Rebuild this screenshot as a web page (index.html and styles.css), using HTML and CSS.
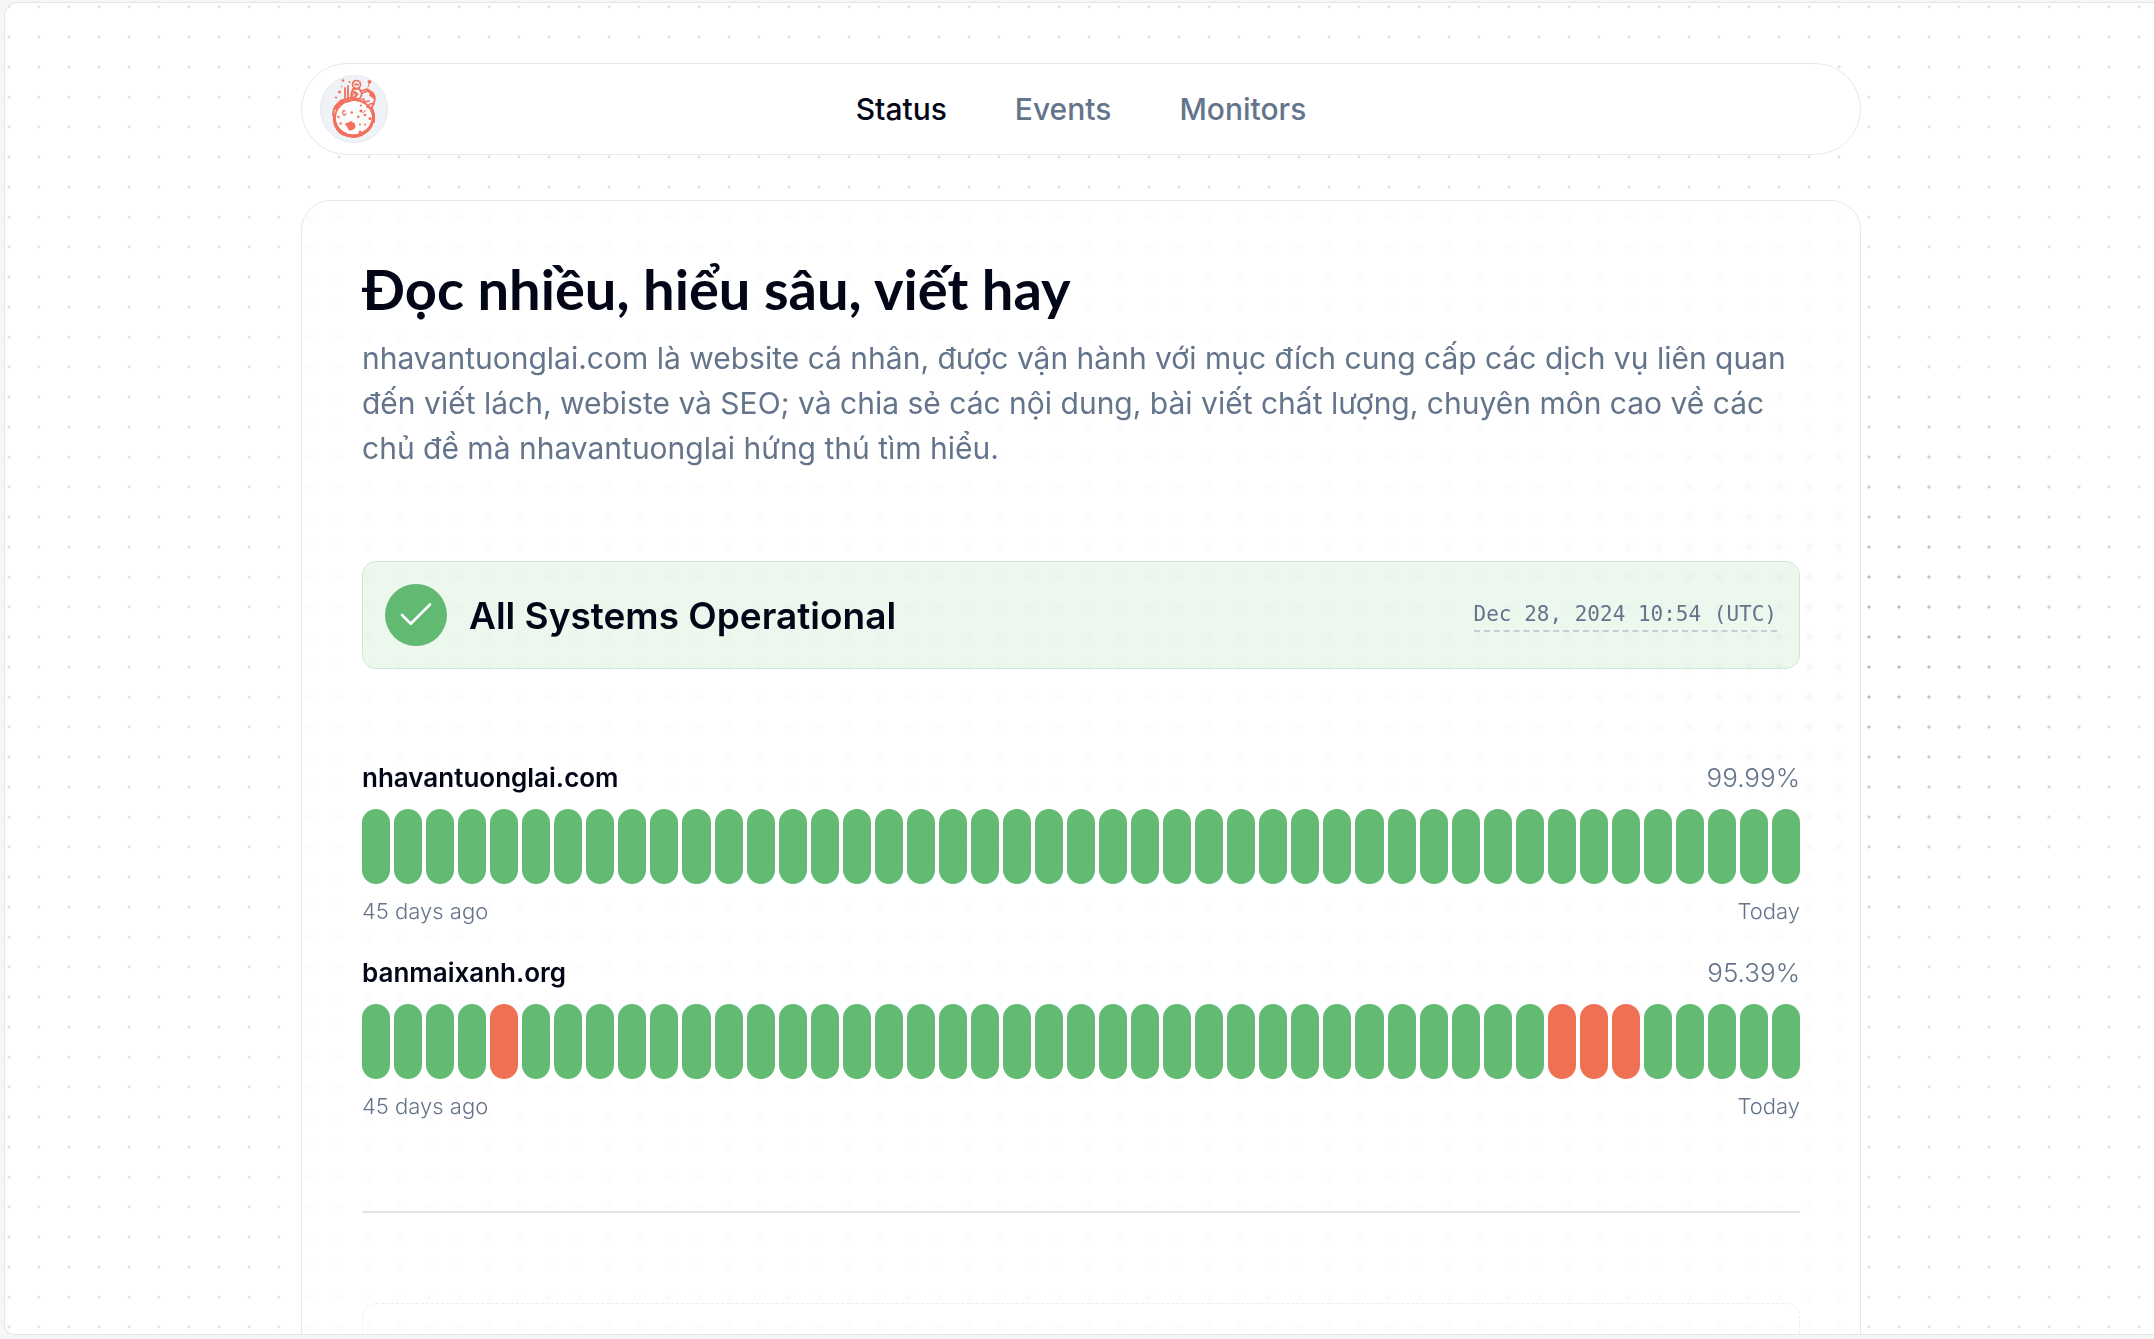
FILE: index.html
```html
<!DOCTYPE html>
<html lang="vi">
<head>
<meta charset="utf-8">
<meta name="viewport" content="width=device-width, initial-scale=1">
<title>Đọc nhiều, hiểu sâu, viết hay</title>
<link rel="stylesheet" href="styles.css">
</head>
<body>
<div class="frame">
  <div class="spotlight" aria-hidden="true"></div>
  <div class="page">
    <header class="topbar">
      <a class="logo" href="#" aria-label="Home">
        <svg viewBox="1 1 66 66" width="66" height="66" fill="none" stroke="#f2705c" stroke-linecap="round" stroke-linejoin="round">
          <ellipse cx="34" cy="43" rx="19" ry="18" fill="#fcfcfd" stroke-width="2" stroke-dasharray="7 1 3 .6"/>
          <path d="M14 39c-2 9 2 17 9 21 7 3 15 3 21-1 7-4 10-10 9-18-1 8-4 13-10 16-6 4-14 4-20 0-6-4-9-10-9-18Z" fill="#f2705c" stroke-width="1.3"/>
          <path d="M13 40c0-7 4-12 10-15l8-2 7 2M16 34l3-5 5-2 6-1M52 33l2 6v8" stroke-width="2"/>
          <path d="M25 23V13m3 11V11m-5 14-3 1M31 22l2-3" stroke-width="1.8"/>
          <circle cx="36.500" cy="9.500" r="4" stroke-width="1.7"/>
          <path d="M35 9.500h3M33 14l6-.5 3 5-2 5-6 1-3-5Z" stroke-width="1.8"/>
          <path d="m34 17 3 2-2 3" stroke-width="2.600"/>
          <path d="m41 16 6-2 6 4 2 4-7-6-6 2M43 24l2 3 4-1M50 20l5 4-1 4-4 1-3 3 4 1 3-4" stroke-width="1.700"/>
          <path d="m48 12 1.500-4M40 25l4-1M43 38l3-3" stroke-width="1"/>
          <path d="M25 36c-2-1-3 1-2 3s2 1 3 0" stroke-width="1.300"/>
          <path d="m26 49 3-1 2-1 3 2 .5 3-2 2-3 .5-1-2Z" fill="#f2705c" stroke-width="1.800"/>
          <g fill="#f2705c" stroke="none">
            <circle cx="23" cy="5.500" r="1.300"/><circle cx="29.500" cy="7" r="1"/><circle cx="49.500" cy="6.800" r="1.900"/>
            <circle cx="19.500" cy="17" r="1.500"/><circle cx="21.500" cy="11.500" r=".8"/><circle cx="16" cy="22.500" r="1.100"/>
            <circle cx="31.700" cy="37.500" r="1.300"/><circle cx="41" cy="30.500" r="1.100"/><circle cx="41" cy="36" r="1.600"/>
            <circle cx="38.300" cy="41.700" r="1.300"/><circle cx="45" cy="40" r="1.300"/><circle cx="50" cy="43.500" r="1.500"/>
            <circle cx="20.700" cy="48.500" r="1.200"/><circle cx="40" cy="49.500" r="1"/><circle cx="45" cy="49.500" r="1"/>
            <circle cx="40" cy="57" r="1.400"/><circle cx="18.500" cy="42" r="1.200"/><circle cx="46.500" cy="15.500" r=".8"/>
          </g>
        </svg>
      </a>
      <nav class="tabs" aria-label="Main">
        <a class="tab tab-active" href="#status" aria-current="page">Status</a>
        <a class="tab" href="#events">Events</a>
        <a class="tab" href="#monitors">Monitors</a>
      </nav>
    </header>

    <main class="card" id="status">
      <div class="intro">
        <h1>Đọc nhiều, hiểu sâu, viết hay</h1>
        <p>nhavantuonglai.com là website cá nhân, được vận hành với mục đích cung cấp các dịch vụ liên quan đến viết lách, webiste và SEO; và chia sẻ các nội dung, bài viết chất lượng, chuyên môn cao về các chủ đề mà nhavantuonglai hứng thú tìm hiểu.</p>
      </div>

      <section class="banner">
        <span class="badge">
          <svg viewBox="0 0 24 24" width="42" height="42" fill="none" stroke="#fff" stroke-width="1.500" stroke-linecap="round" stroke-linejoin="round" aria-hidden="true"><path d="M20 6 9 17l-5-5"/></svg>
        </span>
        <h2>All Systems Operational</h2>
        <time datetime="2024-12-28T10:54Z">Dec 28, 2024 10:54 (UTC)</time>
      </section>

      <div class="monitors" id="monitors">
        <section class="monitor">
          <div class="row"><h3>nhavantuonglai.com</h3><span class="uptime">99.99%</span></div>
          <div class="bars" data-down=""></div>
          <div class="row range"><span>45 days ago</span><span>Today</span></div>
        </section>
        <section class="monitor">
          <div class="row"><h3>banmaixanh.org</h3><span class="uptime">95.39%</span></div>
          <div class="bars" data-down="4,37,38,39"></div>
          <div class="row range"><span>45 days ago</span><span>Today</span></div>
        </section>
      </div>

      <hr>
      <section class="events" id="events"></section>
    </main>
  </div>
</div>
<script src="script.js"></script>
</body>
</html>
```
FILE: styles.css
```css
* { box-sizing: border-box; margin: 0; }

body {
  background: #f6f6f7;
  color: #020617;
  font-family: Inter, "Liberation Sans", sans-serif;
  font-size: 30px;
  line-height: 45px;
}

a { color: inherit; text-decoration: none; }

.frame {
  position: relative;
  height: calc(100vh - 6px);
  margin: 2px 0 4px 4px;
  padding: 60px 24px 0 27px;
  overflow: hidden;
  border: 1px solid #e5e5e6;
  border-right: 0;
  border-radius: 14px 0 0 10px;
  background: radial-gradient(circle, #e2e2e4 1px, transparent 2px) -11px -11px / 30px 30px #fff;
}

/* darker dots fading out around one point */
.spotlight {
  position: absolute;
  inset: 0;
  background: radial-gradient(circle, #bdbdc0 1px, transparent 2px) -11px -11px / 30px 30px;
  mask-image: radial-gradient(circle 300px at 1850px 635px, #000 20%, transparent);
}

.page {
  position: relative;
  display: flex;
  flex-direction: column;
  gap: 45px;
  max-width: 1560px;
  margin: 0 auto;
}

.topbar {
  display: grid;
  grid-template-columns: 1fr auto 1fr;
  align-items: center;
  padding: 11px 18px;
  border: 1px solid #e6e7e9;
  border-radius: 46px;
  background: #fff;
}

.logo {
  display: flex;
  width: 68px;
  border: 1px solid #e4e9f0;
  border-radius: 50%;
  background: #eff3f8;
}

.tabs { display: flex; gap: 68px; line-height: 44px; }
.tab { color: #64748b; font-weight: 500; }
.tab-active { color: #020617; }

.card {
  display: flex;
  flex-direction: column;
  gap: 90px;
  min-height: 1300px;
  padding: 60px 60px 90px;
  border: 1px solid #e6e7e9;
  border-radius: 30px;
  background: rgb(255 255 255 / 40%);
  backdrop-filter: blur(2px);
}

.intro { display: flex; flex-direction: column; gap: 19px; }

h1 {
  font-family: Lato, "Noto Sans", sans-serif;
  font-size: 56px;
  font-weight: 700;
  line-height: 56px;
}

.intro p { color: #64748b; }

.banner {
  display: flex;
  align-items: center;
  gap: 22px;
  padding: 22px;
  border: 1px solid #cfe8d5;
  border-radius: 14px;
  background: rgb(98 186 115 / 12%);
}

.badge {
  display: grid;
  place-items: center;
  width: 62px;
  height: 62px;
  border-radius: 50%;
  background: #61b972;
}

h2 { flex: 1; font-size: 37px; font-weight: 600; }

time {
  border-bottom: 2px dashed #c3cdd3;
  color: #64748b;
  font-family: "DejaVu Sans Mono", "Liberation Mono", monospace;
  font-size: 21px;
  line-height: 32px;
}

.monitors { display: flex; flex-direction: column; gap: 28px; }
.monitor { display: flex; flex-direction: column; gap: 12px; }

.row {
  display: flex;
  align-items: center;
  justify-content: space-between;
  line-height: 38px;
}

h3 { font-size: 26px; font-weight: 600; }
.uptime { color: #64748b; font-size: 26px; font-weight: 300; }

.bars { display: flex; gap: 4px; height: 75px; }
.bar { flex: 1; border-radius: 14px; background: #62ba73; }
.bar-down { background: #ee7153; }

.range {
  color: #64748b;
  font-size: 22px;
  font-weight: 300;
  line-height: 30px;
}

hr { width: 100%; border: 0; border-top: 2px solid #e2e4e7; }

.events {
  min-height: 120px;
  border: 1px dashed #ececee;
  border-radius: 14px;
}
```
FILE: script.js
```js
const DAYS = 45;

document.querySelectorAll(".bars").forEach((bars) => {
  const down = bars.dataset.down.split(",");
  for (let day = 0; day < DAYS; day++) {
    const bar = document.createElement("span");
    bar.className = down.includes(String(day)) ? "bar bar-down" : "bar";
    bars.append(bar);
  }
});
```
